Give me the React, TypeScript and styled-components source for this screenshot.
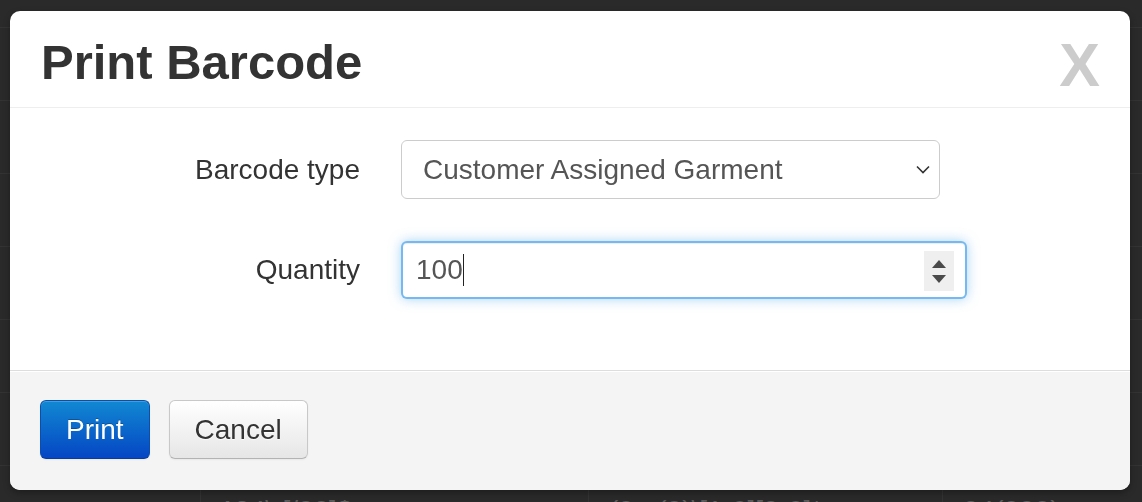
import styled, { createGlobalStyle } from 'styled-components';

const GlobalStyle = createGlobalStyle`
  html, body {
    margin: 0;
    padding: 0;
    background: #2a2a2a;
    font-family: "Liberation Sans", Arial, Helvetica, sans-serif;
  }
  * {
    box-sizing: border-box;
  }
`;

// dimmed list page behind the dialog
const PageTable = styled.div`
  width: 1142px;
  height: 502px;
  overflow: hidden;
  padding-top: 27px;
`;

const PageRow = styled.div`
  display: grid;
  grid-template-columns: 200px 388px 354px 200px;
  height: 73px;
  border-top: 1px solid #333333;
`;

const PageCell = styled.div`
  border-left: 1px solid #333333;
  padding: 29px 0 0 20px;
  color: #5c5c5c;
  font-size: 28px;
  white-space: nowrap;
  overflow: hidden;
  &:first-child {
    border-left: none;
  }
`;

const Overlay = styled.div`
  position: fixed;
  inset: 0;
  padding: 11px 12px 12px 10px;
  display: flex;
`;

const Modal = styled.div`
  flex: 1;
  display: flex;
  flex-direction: column;
  background: #ffffff;
  border-radius: 10px;
  overflow: hidden;
  box-shadow: 0 3px 7px rgba(0, 0, 0, 0.3);
`;

const Header = styled.div`
  height: 97px;
  display: flex;
  align-items: center;
  justify-content: space-between;
  padding: 7px 30px 0 31px;
  border-bottom: 1px solid #eeeeee;
`;

const Title = styled.h3`
  margin: 0;
  font-size: 49px;
  font-weight: bold;
  color: #333333;
  line-height: 1;
`;

const CloseButton = styled.button`
  border: none;
  background: none;
  padding: 0;
  font-family: "Liberation Sans", Arial, sans-serif;
  font-size: 61px;
  font-weight: bold;
  line-height: 1;
  color: #cccccc;
  cursor: pointer;
  margin-top: 5px;
`;

const Body = styled.div`
  flex: 1;
  padding-top: 32px;
`;

const FormGrid = styled.div`
  display: grid;
  grid-template-columns: 350px 1fr;
  column-gap: 41px;
  row-gap: 42px;
  align-items: center;
`;

const Label = styled.label`
  text-align: right;
  font-size: 28px;
  color: #333333;
`;

const SelectBox = styled.div`
  position: relative;
  width: 539px;
  height: 59px;
  display: flex;
  align-items: center;
  padding-left: 21px;
  border: 1px solid #cccccc;
  border-radius: 6px;
  background: #ffffff;
  font-size: 28px;
  color: #555555;
`;

const Chevron = styled.svg`
  position: absolute;
  right: 9px;
  top: 24px;
`;

const NumberField = styled.div`
  position: relative;
  width: 566px;
  height: 58px;
  display: flex;
  align-items: center;
  padding-left: 13px;
  border: 2px solid rgba(82, 168, 236, 0.8);
  border-radius: 6px;
  background: #ffffff;
  box-shadow: inset 0 1px 1px rgba(0, 0, 0, 0.075), 0 0 12px rgba(82, 168, 236, 0.5);
  font-size: 28px;
  color: #555555;
`;

const Caret = styled.span`
  display: inline-block;
  width: 1px;
  height: 32px;
  background: #222222;
  vertical-align: middle;
`;

const Spinner = styled.div`
  position: absolute;
  right: 11px;
  top: 8px;
  width: 30px;
  height: 40px;
  background: #efefef;
  display: flex;
  flex-direction: column;
  align-items: center;
  justify-content: center;
  gap: 7px;
`;

const Footer = styled.div`
  height: 120px;
  display: flex;
  align-items: center;
  gap: 19px;
  padding: 0 0 2px 30px;
  background: #f4f4f4;
  border-top: 1px solid #dddddd;
  box-shadow: inset 0 1px 0 #ffffff;
`;

const Button = styled.button<{ $primary?: boolean }>`
  height: 59px;
  padding: 0 25px;
  font-family: "Liberation Sans", Arial, sans-serif;
  font-size: 28px;
  border-radius: 6px;
  cursor: pointer;
  color: ${(p) => (p.$primary ? '#ffffff' : '#333333')};
  background: ${(p) =>
    p.$primary
      ? 'linear-gradient(to bottom, #1188d2, #0546c4)'
      : 'linear-gradient(to bottom, #ffffff, #e6e6e6)'};
  border: 1px solid ${(p) => (p.$primary ? '#0a4fb0' : '#c8c8c8')};
  border-bottom-color: ${(p) => (p.$primary ? '#073c9a' : '#b3b3b3')};
  box-shadow: inset 0 1px 0 rgba(255, 255, 255, 0.2), 0 1px 2px rgba(0, 0, 0, 0.05);
  text-shadow: ${(p) => (p.$primary ? '0 -1px 0 rgba(0,0,0,0.25)' : '0 1px 1px rgba(255,255,255,0.75)')};
`;

const pageRows = [
  ['', '', '', ''],
  ['', '', '', ''],
  ['', '', '', ''],
  ['', '', '', ''],
  ['', '', '', ''],
  ['', '', '', ''],
  ['', '^34\\-[/00]$', '(0...(0)\\[1-9][0-9]*', '04(000)-'],
];

const App = () => {
  return (
    <>
      <GlobalStyle />
      <PageTable>
        {pageRows.map((row, i) => (
          <PageRow key={i}>
            {row.map((cell, j) => (
              <PageCell key={j}>{cell}</PageCell>
            ))}
          </PageRow>
        ))}
      </PageTable>
      <Overlay>
        <Modal>
          <Header>
            <Title>Print Barcode</Title>
            <CloseButton>X</CloseButton>
          </Header>
          <Body>
            <FormGrid>
              <Label>Barcode type</Label>
              <SelectBox>
                Customer Assigned Garment
                <Chevron width="14" height="9" viewBox="0 0 14 9">
                  <path d="M1 1.5 L7 7.5 L13 1.5" fill="none" stroke="#333" strokeWidth="1.6" />
                </Chevron>
              </SelectBox>
              <Label>Quantity</Label>
              <NumberField>
                100
                <Caret />
                <Spinner>
                  <svg width="14" height="8" viewBox="0 0 14 8">
                    <path d="M0 8 L7 0 L14 8 Z" fill="#4a4a4a" />
                  </svg>
                  <svg width="14" height="8" viewBox="0 0 14 8">
                    <path d="M0 0 L14 0 L7 8 Z" fill="#4a4a4a" />
                  </svg>
                </Spinner>
              </NumberField>
            </FormGrid>
          </Body>
          <Footer>
            <Button $primary>Print</Button>
            <Button>Cancel</Button>
          </Footer>
        </Modal>
      </Overlay>
    </>
  );
};

export default App;
